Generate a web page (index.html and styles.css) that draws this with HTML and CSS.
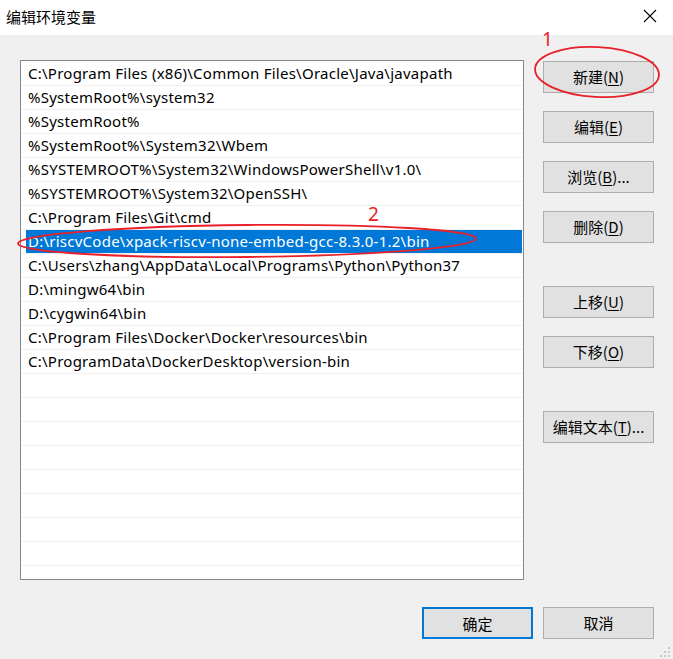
FILE: index.html
```html
<!DOCTYPE html>
<html lang="zh-CN">
<head>
<meta charset="utf-8">
<title>编辑环境变量</title>
<link rel="stylesheet" href="styles.css">
</head>
<body>
<div class="window">
  <div class="titlebar">
    <span class="title">编辑环境变量</span>
    <svg class="close" width="14" height="14" viewBox="0 0 14 14"><path d="M1 1 L13 13 M13 1 L1 13" stroke="#000" stroke-width="1.1" fill="none"/></svg>
  </div>
  <div class="body">
    <div class="main">
      <div class="list">
        <div class="row"><div class="cell">C:\Program Files (x86)\Common Files\Oracle\Java\javapath</div></div>
        <div class="row"><div class="cell">%SystemRoot%\system32</div></div>
        <div class="row"><div class="cell">%SystemRoot%</div></div>
        <div class="row"><div class="cell">%SystemRoot%\System32\Wbem</div></div>
        <div class="row"><div class="cell">%SYSTEMROOT%\System32\WindowsPowerShell\v1.0\</div></div>
        <div class="row"><div class="cell">%SYSTEMROOT%\System32\OpenSSH\</div></div>
        <div class="row"><div class="cell">C:\Program Files\Git\cmd</div></div>
        <div class="row"><div class="cell sel">D:\riscvCode\xpack-riscv-none-embed-gcc-8.3.0-1.2\bin</div></div>
        <div class="row"><div class="cell">C:\Users\zhang\AppData\Local\Programs\Python\Python37</div></div>
        <div class="row"><div class="cell">D:\mingw64\bin</div></div>
        <div class="row"><div class="cell">D:\cygwin64\bin</div></div>
        <div class="row"><div class="cell">C:\Program Files\Docker\Docker\resources\bin</div></div>
        <div class="row"><div class="cell">C:\ProgramData\DockerDesktop\version-bin</div></div>
        <div class="row"><div class="cell"></div></div>
        <div class="row"><div class="cell"></div></div>
        <div class="row"><div class="cell"></div></div>
        <div class="row"><div class="cell"></div></div>
        <div class="row"><div class="cell"></div></div>
        <div class="row"><div class="cell"></div></div>
        <div class="row"><div class="cell"></div></div>
        <div class="row"><div class="cell"></div></div>
        <div class="row"><div class="cell"></div></div>
      </div>
      <div class="side">
        <button class="btn">新建(<u>N</u>)</button>
        <button class="btn">编辑(<u>E</u>)</button>
        <button class="btn">浏览(<u>B</u>)...</button>
        <button class="btn">删除(<u>D</u>)</button>
        <button class="btn gap">上移(<u>U</u>)</button>
        <button class="btn">下移(<u>O</u>)</button>
        <button class="btn gap">编辑文本(<u>T</u>)...</button>
      </div>
    </div>
    <div class="footer">
      <button class="btn default">确定</button>
      <button class="btn">取消</button>
    </div>
    <svg class="grip" width="12" height="12" viewBox="0 0 12 12">
      <rect x="8" y="0" width="2" height="2" fill="#c8c8c8"/>
      <rect x="4" y="4" width="2" height="2" fill="#c8c8c8"/>
      <rect x="8" y="4" width="2" height="2" fill="#c8c8c8"/>
      <rect x="0" y="8" width="2" height="2" fill="#c8c8c8"/>
      <rect x="4" y="8" width="2" height="2" fill="#c8c8c8"/>
      <rect x="8" y="8" width="2" height="2" fill="#c8c8c8"/>
    </svg>
  </div>
  <svg class="annot" width="673" height="659" viewBox="0 0 673 659">
    <ellipse cx="597" cy="72" rx="62" ry="25" transform="rotate(3 597 72)" fill="none" stroke="#e8202a" stroke-width="1.8"/>
    <ellipse cx="247" cy="241" rx="229" ry="16" transform="rotate(-0.6 247 241)" fill="none" stroke="#e8202a" stroke-width="1.8"/>
  </svg>
  <span class="num num1">1</span>
  <span class="num num2">2</span>
</div>
</body>
</html>
```
FILE: styles.css
```css
* { box-sizing: border-box; }
html, body { margin: 0; padding: 0; }
body {
  width: 673px;
  height: 659px;
  overflow: hidden;
  font-family: "Noto Sans", "Noto Sans CJK SC", sans-serif;
  font-size: 15px;
  color: #000;
}
.window {
  position: relative;
  width: 673px;
  height: 659px;
  background: #f0f0f0;
}
.titlebar {
  height: 35px;
  background: #fff;
  display: flex;
  align-items: center;
  justify-content: space-between;
  padding: 0 16px 2px 6px;
}
.title {
  font-family: "Noto Sans CJK SC", sans-serif;
  font-size: 15px;
}
.close { display: block; margin-top: -2px; }
.body {
  position: relative;
  height: 624px;
}
.main {
  display: flex;
  padding: 25px 0 0 20px;
  gap: 19px;
}
.list {
  width: 504px;
  height: 520px;
  background: #fff;
  border: 1px solid #828790;
  padding-top: 1px;
  overflow: hidden;
}
.row {
  height: 24px;
  border-bottom: 1px solid #f0f0f0;
}
.cell {
  height: 23px;
  margin-left: 5px;
  margin-right: 1px;
  padding-left: 2px;
  line-height: 23px;
  white-space: nowrap;
  font-family: "Noto Sans", sans-serif;
  font-size: 15px;
  letter-spacing: 0.25px;
}
.cell.sel {
  background: #0078d7;
  color: #fff;
}
.side {
  display: flex;
  flex-direction: column;
  gap: 18px;
  padding-top: 1px;
}
.btn {
  width: 111px;
  height: 32px;
  background: #e1e1e1;
  border: 1px solid #adadad;
  font-family: "Noto Sans CJK SC", sans-serif;
  font-size: 15px;
  color: #000;
  padding: 0;
  margin: 0;
  line-height: 30px;
}
.btn u { text-underline-offset: 2px; }
.btn.gap { margin-top: 25px; }
.btn.default {
  border: 2px solid #0078d7;
}
.footer {
  position: absolute;
  left: 422px;
  top: 572px;
  display: flex;
  gap: 10px;
}
.footer .btn { width: 111px; height: 32px; }
.grip {
  position: absolute;
  right: 1px;
  bottom: 0;
}
.annot {
  position: absolute;
  left: 0;
  top: 0;
  pointer-events: none;
}
.num {
  position: absolute;
  color: #e8202a;
  font-family: "Noto Sans", sans-serif;
  font-size: 19px;
  line-height: 1;
}
.num1 { left: 542px; top: 30px; }
.num2 { left: 368px; top: 205px; }
```
